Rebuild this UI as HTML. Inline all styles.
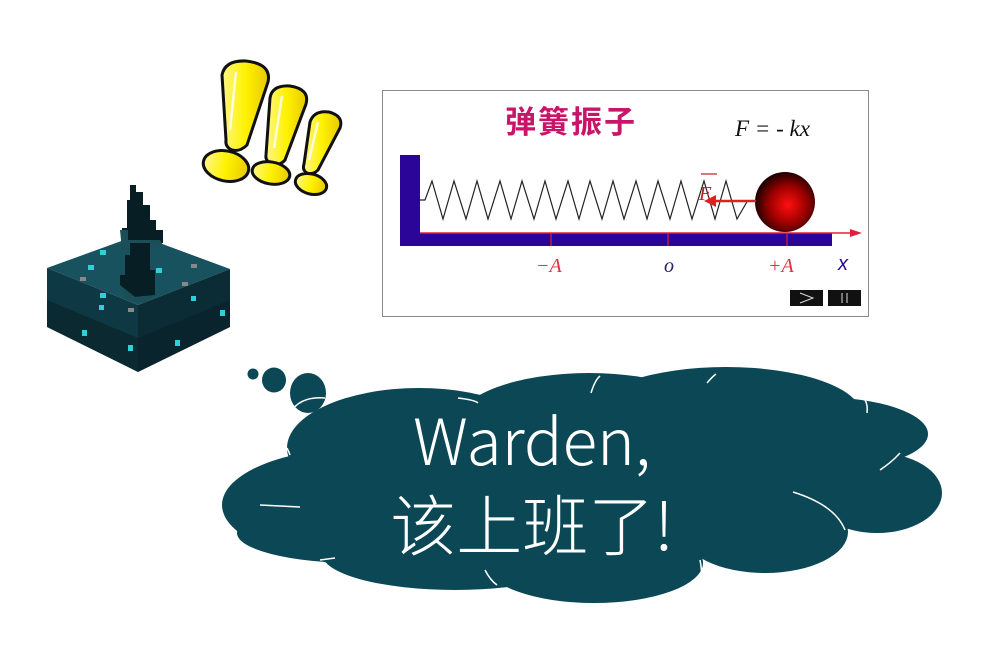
<!DOCTYPE html>
<html><head><meta charset="utf-8"><style>
html,body{margin:0;padding:0;background:#fff;width:995px;height:646px;overflow:hidden}
svg{position:absolute;left:0;top:0}
</style></head><body>
<svg width="995" height="646" viewBox="0 0 995 646" xmlns="http://www.w3.org/2000/svg">
<defs>
<radialGradient id="ball" cx="0.55" cy="0.55" r="0.55">
<stop offset="0" stop-color="#ff1010"/><stop offset="0.55" stop-color="#a00000"/><stop offset="1" stop-color="#200000"/>
</radialGradient>
<linearGradient id="yel" x1="0" y1="0" x2="1" y2="0"><stop offset="0" stop-color="#fff68a"/><stop offset="0.5" stop-color="#fff200"/><stop offset="1" stop-color="#e8c800"/></linearGradient>
</defs>

<!-- sculk block -->
<polygon points="47,268 138,235 230,269 138,305" fill="#17525e"/>
<polygon points="47,268 138,305 138,372 47,327" fill="#0e3843"/>
<polygon points="138,305 230,269 230,327 138,372" fill="#0b2c35"/>
<polygon points="47,300 138,338 230,300 230,327 138,372 47,327" fill="#081f27" opacity="0.6"/>
<g fill="#2fd0d8">
<rect x="100" y="250" width="6" height="5"/><rect x="88" y="265" width="6" height="5"/><rect x="156" y="268" width="6" height="5"/><rect x="100" y="293" width="6" height="5"/><rect x="99" y="305" width="5" height="5"/><rect x="82" y="330" width="5" height="6"/><rect x="128" y="345" width="5" height="6"/><rect x="175" y="340" width="5" height="6"/><rect x="220" y="310" width="5" height="6"/><rect x="191" y="296" width="5" height="5"/>
</g>
<g fill="#888"><rect x="80" y="277" width="6" height="4"/><rect x="191" y="264" width="6" height="4"/><rect x="182" y="282" width="6" height="4"/><rect x="128" y="308" width="6" height="4"/></g>
<polygon points="130,185 136,185 136,192 143,192 143,205 150,205 150,220 156,220 156,230 163,230 163,243 145,243 145,250 122,250 122,228 127,228 127,200 130,200" fill="#071e25"/>
<polygon points="120,230 128,230 128,240 160,240 163,245 145,250 122,250" fill="#1c4e58"/>
<polygon points="130,243 150,243 150,270 155,270 155,295 135,297 120,285 120,275 125,275 125,255 130,255" fill="#071e25"/>
<polygon points="120,285 135,297 155,295 145,303 128,300" fill="#1c4e58"/>

<!-- exclamations -->
<g stroke="#111" stroke-width="3" fill="url(#yel)">
<path d="M222,75 Q225,60 246,61 Q272,64 268,82 L247,145 Q240,152 232,150 Q225,147 226,140 Z"/>
<ellipse cx="226" cy="166" rx="23" ry="15" transform="rotate(12 226 166)"/>
<path d="M270,98 Q272,85 290,86 Q310,89 306,104 L285,160 Q280,166 272,164 Q265,161 266,155 Z"/>
<ellipse cx="271" cy="173" rx="19" ry="11" transform="rotate(10 271 173)"/>
<path d="M310,122 Q314,110 329,112 Q344,116 340,128 L318,170 Q313,175 307,173 Q302,170 304,164 Z"/>
<ellipse cx="311" cy="184" rx="16" ry="10" transform="rotate(15 311 184)"/>
</g>
<g stroke="#fff" stroke-width="2.5" fill="none" opacity="0.8"><path d="M236,72 L230,130"/><path d="M282,96 L274,148"/><path d="M318,122 L309,160"/></g>

<!-- spring box -->
<rect x="382.5" y="90.5" width="486" height="226" fill="#fff" stroke="#8a8a8a"/>
<text x="505" y="133" font-family="'Noto Sans CJK SC',sans-serif" font-weight="bold" font-size="31" fill="#c8156a" letter-spacing="2">弹簧振子</text>
<text x="735" y="136" font-family="'Liberation Serif',serif" font-style="italic" font-size="23" fill="#111">F = - kx</text>
<rect x="400" y="155" width="20" height="91" fill="#2a0598"/>
<rect x="420" y="233" width="412" height="13" fill="#2a0598"/>
<line x1="420" y1="233" x2="852" y2="233" stroke="#e0203a" stroke-width="1.5"/>
<polygon points="862,233 850,229 850,237" fill="#e0203a"/>
<g stroke="#e0203a" stroke-width="1.2"><line x1="551" y1="233" x2="551" y2="246"/><line x1="668" y1="233" x2="668" y2="246"/><line x1="787" y1="233" x2="787" y2="246"/></g>
<polyline fill="none" stroke="#222" stroke-width="1.2" points="420,200 425,200 432,181 443,219 454,181 466,219 477,181 488,219 500,181 511,219 522,181 534,219 545,181 556,219 568,181 579,219 590,181 602,219 613,181 624,219 636,181 647,219 658,181 670,219 681,181 692,219 704,181 715,219 726,181 737,219 748,200"/>
<circle cx="785" cy="202" r="30" fill="url(#ball)"/>
<line x1="756" y1="201" x2="712" y2="201" stroke="#e02020" stroke-width="2.5"/>
<polygon points="704,201 716,195 716,207" fill="#e02020"/>
<text x="699" y="200" font-family="'Liberation Serif',serif" font-style="italic" font-size="20" fill="#c02020">F</text>
<line x1="701" y1="174" x2="717" y2="174" stroke="#c02020" stroke-width="1.2"/>
<text x="536" y="272" font-family="'Liberation Serif',serif" font-style="italic" font-size="20" fill="#e03040">−A</text>
<text x="664" y="272" font-family="'Liberation Serif',serif" font-style="italic" font-size="20" fill="#2a2070">o</text>
<text x="768" y="272" font-family="'Liberation Serif',serif" font-style="italic" font-size="20" fill="#e03040">+A</text>
<text x="838" y="270" font-family="'Liberation Sans',sans-serif" font-style="italic" font-size="20" fill="#2a0598">x</text>
<rect x="790" y="290" width="33" height="16" fill="#111"/>
<rect x="828" y="290" width="33" height="16" fill="#111"/>
<path d="M800,293 L813,298 L800,303" fill="none" stroke="#ddd" stroke-width="1"/>
<path d="M842,293 V303 M847,293 V303" stroke="#ddd" stroke-width="1"/>

<!-- cloud -->
<g fill="#0b4755">
<circle cx="253" cy="374" r="5.5"/>
<ellipse cx="274" cy="380" rx="12" ry="12.5"/>
<ellipse cx="308" cy="393" rx="18" ry="20"/>
<ellipse cx="360" cy="505" rx="138" ry="57"/>
<ellipse cx="419" cy="448" rx="132" ry="60"/>
<ellipse cx="589" cy="422" rx="131" ry="49"/>
<ellipse cx="726" cy="414" rx="135" ry="47"/>
<ellipse cx="819" cy="434" rx="109" ry="37"/>
<ellipse cx="877" cy="493" rx="65" ry="40"/>
<ellipse cx="765" cy="532" rx="83" ry="41"/>
<ellipse cx="594" cy="563" rx="109" ry="40"/>
<ellipse cx="455" cy="554" rx="133" ry="36"/>
<ellipse cx="357" cy="533" rx="120" ry="30"/>
<ellipse cx="600" cy="490" rx="260" ry="70"/>
<ellipse cx="780" cy="480" rx="100" ry="50"/>
</g>
<g fill="none" stroke="#fff" stroke-width="1.5">
<path d="M290,413 Q300,396 325,398"/>
<path d="M458,398 Q475,400 478,403"/>
<path d="M591,393 Q595,380 600,376"/>
<path d="M707,383 Q712,377 716,374"/>
<path d="M865,400 Q868,405 867,413"/>
<path d="M880,470 Q892,462 900,453"/>
<path d="M793,492 Q835,505 845,530"/>
<path d="M700,560 Q703,575 700,583"/>
<path d="M485,570 Q490,580 497,585"/>
<path d="M320,560 L335,558"/>
<path d="M260,505 L300,507"/>
<path d="M287,448 Q289,452 290,455"/>
</g>
<text x="532" y="465" text-anchor="middle" font-family="'Noto Sans CJK SC',sans-serif" font-weight="300" font-size="64" fill="#fff">Warden,</text>
<text x="532" y="550" text-anchor="middle" font-family="'Noto Sans CJK SC',sans-serif" font-size="66" font-weight="300" fill="#fff">该上班了!</text>
</svg>
</body></html>
